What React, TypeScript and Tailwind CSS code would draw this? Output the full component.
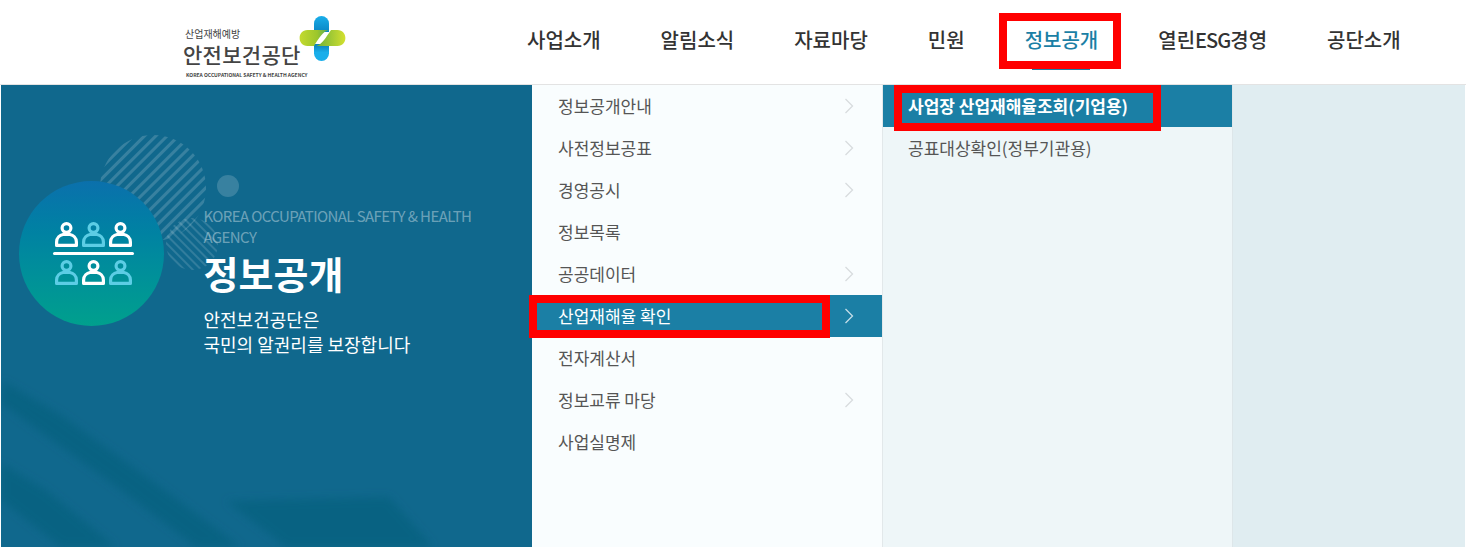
const font = { fontFamily: '"Noto Sans CJK KR", "Noto Sans", sans-serif' };

const navItems = ["사업소개", "알림소식", "자료마당", "민원", "정보공개", "열린ESG경영", "공단소개"];

const menuItems = [
  { label: "정보공개안내", arrow: true },
  { label: "사전정보공표", arrow: true },
  { label: "경영공시", arrow: true },
  { label: "정보목록", arrow: false },
  { label: "공공데이터", arrow: true },
  { label: "산업재해율 확인", arrow: true, active: true },
  { label: "전자계산서", arrow: false },
  { label: "정보교류 마당", arrow: true },
  { label: "사업실명제", arrow: false },
];

function Chevron({ color }: { color: string }) {
  return (
    <svg width="10" height="16" viewBox="0 0 10 16" fill="none" stroke={color} strokeWidth="1.3">
      <path d="M1.5 1 L8.5 8 L1.5 15" />
    </svg>
  );
}

function Logo() {
  return (
    <div className="ml-[183px] flex w-[163px] shrink-0 items-start">
      <div className="w-[130px] pt-[28px] text-[#444]">
        <p className="ml-[2px] text-[10px] leading-[12px]">산업재해예방</p>
        <p className="text-[21px] font-medium leading-[28px] tracking-[0.3px] whitespace-nowrap">안전보건공단</p>
        <p className="ml-[3px] mt-[3px] text-[5px] font-bold leading-[7px] whitespace-nowrap">
          KOREA OCCUPATIONAL SAFETY &amp; HEALTH AGENCY
        </p>
      </div>
      <svg className="mt-[16px] -ml-[14px] shrink-0" width="47" height="46" viewBox="0 0 47 46">
        <defs>
          <linearGradient id="logoBlueTop" x1="0" y1="0" x2="0" y2="1">
            <stop offset="0" stopColor="#19aeea" />
            <stop offset="1" stopColor="#0b86c4" />
          </linearGradient>
          <linearGradient id="logoBlueBottom" x1="0" y1="0" x2="0" y2="1">
            <stop offset="0" stopColor="#0b7fb8" />
            <stop offset="0.5" stopColor="#19aeea" />
          </linearGradient>
          <linearGradient id="logoGreenLeft" x1="0" y1="0" x2="1" y2="0">
            <stop offset="0" stopColor="#c3da2e" />
            <stop offset="0.6" stopColor="#9cc62c" />
            <stop offset="1" stopColor="#4da85a" />
          </linearGradient>
          <linearGradient id="logoGreenRight" x1="0" y1="0" x2="1" y2="0">
            <stop offset="0" stopColor="#6cb13a" />
            <stop offset="1" stopColor="#d3e02f" />
          </linearGradient>
        </defs>
        <path d="M15 7.5 a7.5 7.5 0 0 1 15 0 V16 H15Z" fill="url(#logoBlueTop)" />
        <path d="M15 28 H30 V37.5 a7.5 7.5 0 0 1 -15 0Z" fill="url(#logoBlueBottom)" />
        <path d="M8.5 14 H30 C24 15 20 22 15 30 H8.5 C-2 30 -2 14 8.5 14Z" fill="url(#logoGreenLeft)" />
        <path d="M32 14 H38.5 C49 14 49 30 38.5 30 H17 C23 29 27 21 32 14Z" fill="url(#logoGreenRight)" />
      </svg>
    </div>
  );
}

function Person({ color }: { color: string }) {
  return (
    <svg width="23" height="25" viewBox="0 0 23 25" fill="none" stroke={color} strokeWidth="3.2">
      <circle cx="11.5" cy="6" r="4.4" />
      <path d="M1.6 23.4 V20 C1.6 15.5 5 13 8 12.5 H15 C18 13 21.4 15.5 21.4 20 V23.4 Z" strokeLinejoin="round" />
    </svg>
  );
}

function Backdrop() {
  return (
    <svg className="absolute inset-0" width="531" height="462" viewBox="0 0 531 462">
      <defs>
        <pattern id="hatchA" width="8" height="8" patternUnits="userSpaceOnUse" patternTransform="rotate(-45)">
          <rect width="8" height="3" fill="#fff" fillOpacity="0.17" />
        </pattern>
        <pattern id="hatchB" width="6" height="6" patternUnits="userSpaceOnUse" patternTransform="rotate(45)">
          <rect width="6" height="2" fill="#fff" fillOpacity="0.14" />
        </pattern>
        <filter id="soft">
          <feGaussianBlur stdDeviation="4" />
        </filter>
      </defs>
      <g filter="url(#soft)" fill="#0c5c78" fillOpacity="0.5">
        <path d="M2 296 L60 330 L150 395 L240 462 L195 462 L120 405 L30 340 L0 318Z" />
        <path d="M0 378 L45 405 L115 462 L60 462 L0 415Z" />
        <path d="M225 416 L388 412 L432 462 L285 462Z" />
      </g>
      <circle cx="152" cy="103" r="53" fill="url(#hatchA)" />
      <circle cx="191" cy="159" r="26" fill="url(#hatchB)" />
      <circle cx="227" cy="101" r="11" fill="#fff" fillOpacity="0.17" />
    </svg>
  );
}

function Hero() {
  return (
    <section className="relative ml-[1px] flex h-[462px] w-[531px] shrink-0 items-start overflow-hidden bg-[#10688d] pl-[18px] pt-[96px]">
      <Backdrop />
      <div className="relative flex h-[145px] w-[145px] shrink-0 flex-col items-center justify-center rounded-full bg-gradient-to-b from-[#0b70ac] to-[#01a08d] pl-[4px]">
        <div className="flex gap-[4px]">
          <Person color="#fff" />
          <Person color="#5ccde5" />
          <Person color="#fff" />
        </div>
        <div className="my-[5px] h-[3px] w-[81px] rounded-full bg-white" />
        <div className="flex gap-[4px]">
          <Person color="#5ccde5" />
          <Person color="#fff" />
          <Person color="#5ccde5" />
        </div>
      </div>
      <div className="relative ml-[39.5px] w-[281px] pt-[24px]">
        <p className="text-[15px] leading-[21px] tracking-[-0.6px] text-white/40">
          KOREA OCCUPATIONAL SAFETY &amp; HEALTH AGENCY
        </p>
        <h2 className="mt-[1px] text-[38px] font-bold leading-[50px] text-white">정보공개</h2>
        <p className="mt-[9px] text-[18px] leading-[25px] text-white">
          안전보건공단은
          <br />
          국민의 알권리를 보장합니다
        </p>
      </div>
    </section>
  );
}

export default function App() {
  return (
    <div className="relative h-[548px] w-[1466px] overflow-hidden bg-white" style={font}>
      <header className="flex h-[85px] items-start border-b border-[#e3e3e3]">
        <Logo />
        <nav className="ml-[181px] flex gap-[60px]">
          {navItems.map((item) => (
            <a
              key={item}
              className={`relative h-[70px] whitespace-nowrap pt-[25px] text-[20px] font-medium leading-[30px] ${
                item === "정보공개" ? "text-[#1b7fa5]" : "text-[#333]"
              }`}
            >
              {item === "열린ESG경영" ? (
                <>
                  열린<span className="tracking-[-1px]">ESG</span>경영
                </>
              ) : (
                item
              )}
              {item === "정보공개" && (
                <span className="absolute bottom-0 left-[7px] h-[2px] w-[58px] bg-[#1b7fa5]" />
              )}
            </a>
          ))}
        </nav>
      </header>

      <div className="flex h-[462px] items-stretch">
        <Hero />
        <ul className="w-[351px] shrink-0 border-r border-[#e2e8ea] bg-[#f9fdfe]">
          {menuItems.map((m) => (
            <li
              key={m.label}
              className={`flex h-[42px] items-center justify-between pl-[26px] pr-[28px] text-[17px] ${
                m.active ? "bg-[#1b7fa5] text-white" : "text-[#555]"
              }`}
            >
              <span>{m.label}</span>
              {m.arrow && <Chevron color={m.active ? "#c4dde8" : "#d8dcde"} />}
            </li>
          ))}
        </ul>
        <ul className="w-[350px] shrink-0 border-r border-[#dde6e9] bg-[#eef6f8]">
          <li className="flex h-[42px] items-center bg-[#1b7fa5] pl-[25px] text-[17px] font-bold text-white">
            사업장 산업재해율조회(기업용)
          </li>
          <li className="flex h-[42px] items-center pl-[25px] text-[17px] text-[#555]">
            공표대상확인(정부기관용)
          </li>
        </ul>
        <div className="mr-[1px] flex-1 bg-[#e0edf1]" />
      </div>

      {/* red annotation boxes */}
      <div className="absolute left-[999px] top-[13px] h-[56px] w-[122px] border-[8px] border-[#ff0000]" />
      <div className="absolute left-[529px] top-[295px] h-[43px] w-[301px] border-[8px] border-[#ff0000]" />
      <div className="absolute left-[894px] top-[85px] h-[46px] w-[267px] border-[8px] border-[#ff0000]" />
    </div>
  );
}
